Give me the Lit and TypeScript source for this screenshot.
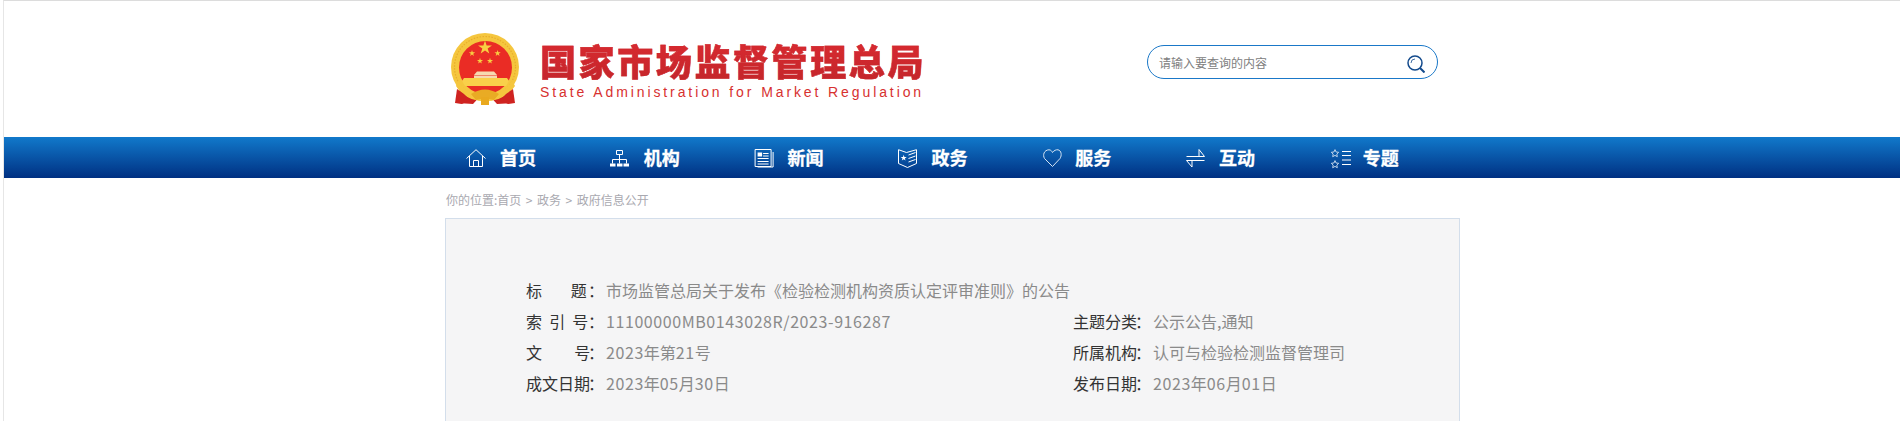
import { LitElement, html, css, svg } from "lit";
import { customElement } from "lit/decorators.js";

const star = (cx: number, cy: number, r: number) => {
  const pts: string[] = [];
  for (let i = 0; i < 10; i++) {
    const rad = i % 2 ? r * 0.382 : r;
    const a = -Math.PI / 2 + (i * Math.PI) / 5;
    pts.push(`${(cx + rad * Math.cos(a)).toFixed(2)},${(cy + rad * Math.sin(a)).toFixed(2)}`);
  }
  return svg`<polygon points=${pts.join(" ")} />`;
};

const emblem = html`<svg class="emblem" viewBox="0 0 68 72" width="68" height="72">
  <path d="M10 50 L6 70 L22 71 L32 60Z" fill="#cf2320"/>
  <path d="M58 50 L62 70 L46 71 L36 60Z" fill="#cf2320"/>
  <circle cx="34" cy="34" r="34" fill="#f5c63e"/>
  <circle cx="34" cy="34" r="30.5" fill="none" stroke="#e8ad2c" stroke-width="1.2" stroke-dasharray="1.500 1.500"/>
  <circle cx="34.500" cy="34.500" r="26.500" fill="#ea2c25"/>
  <g fill="#f8cf42">
    ${star(34, 14.7, 7.3)}${star(21, 20.3, 3.3)}${star(46.6, 20.3, 3.3)}${star(29, 28, 3.2)}${star(39, 28, 3.2)}
  </g>
  <path d="M26 38.500h17l3 3.500h-23zM23 42.500h23v2.500h-23z" fill="#f6d9b0"/>
  <path d="M13 45h43l2 3-3 5H14l-3-5z" fill="#f9d04a"/>
  <path d="M8 47 Q14 62 34 63 Q54 62 61 47 L64 53 Q54 68 34 68 Q14 68 5 53Z" fill="#f5c63e"/>
  <path d="M20 61 q14 -9 28 0 l-5 6 q-9 -3 -18 0z" fill="#e9ab24"/>
  <path d="M30 64h8v8h-8z" fill="#e9a91f"/>
  <path d="M6 56 L4 70 L11 71 L19 67 L13 61Z" fill="#cf2320"/>
  <path d="M62 56 L64 70 L57 71 L49 67 L55 61Z" fill="#cf2320"/>
</svg>`;

const iHome = html`<svg viewBox="0 -2 20 20" width="20" height="20"><path d="M.5 9.500 10 .7 19.500 9.500M3.500 7v10.500h13V7M7.500 17.500V11.500h5v6" /></svg>`;
const iOrg = html`<svg viewBox="0 -2 20 20" width="20" height="20"><path d="M6.500 1.500h6v4h-6zM9.500 5.500v9M2.500 14.500v-4h14v4" /><path class="f" d="M0 14.500h5.500v3H0zM7 14.500h5.500v3H7zM13.500 14.500H19v3h-5.500z"/></svg>`;
const iNews = html`<svg viewBox="-.6 -2 20 20" width="20" height="20"><path d="M.5.500h16v17H.5zM18.500 3v15H3M3 9.500h11M3 12.500h11M3 15h11M8.500 4.500H14M8.500 7H14" /><path class="f" d="M3 3.500h4.500v4H3z"/></svg>`;
const iGov = html`<svg viewBox="-1 -2 20 20" width="20" height="20"><path d="M.5.700 8.500 3.500 18.500.7V14.500L9.500 18.500.5 14.500ZM10.500 6 17.500 3.500M10.500 9.500 17.500 7M10.500 13 17.500 10.500" /><g class="f">${star(5.7, 9, 3.2)}</g></svg>`;
const iSvc = html`<svg class="dim" viewBox="-2 -2 20 20" width="20" height="20"><path d="M9.500 17.500 1.500 9.500C-.5 6 1 1 6 .8 8 .8 9 2.500 9.500 3.500 11 1.500 13 .5 15 .8 18.500 1.500 19 6.500 17 9.500Z" /></svg>`;
const iSwap = html`<svg viewBox="-1.500 -2 20 20" width="20" height="20"><path d="M0 7.500H18L12.500 .5V7.500M18 11.500H0L5.500 18V11.500" /></svg>`;
const iTopic = html`<svg viewBox="-2 -2 20 20" width="20" height="20"><path class="dimS" d="M4 .6 5.100 3 7.700 3.300 5.800 5.100 6.300 7.700 4 6.400 1.700 7.700 2.200 5.100.3 3.300 2.900 3zM4 11.600 5.100 14 7.700 14.300 5.800 16.100 6.300 18.700 4 17.400 1.700 18.700 2.200 16.100.3 14.300 2.900 14z"/><path d="M11 2.500h9M11 6.500h9M11 11h9M11 15.500h9" /></svg>`;

const navItems = [
  ["首页", iHome], ["机构", iOrg], ["新闻", iNews], ["政务", iGov],
  ["服务", iSvc], ["互动", iSwap], ["专题", iTopic],
] as const;

const runs = (v: string) =>
  v.split(/([0-9A-Za-z\/\-]+)/).map((s, i) => (i % 2 ? html`<span class="n">${s}</span>` : s));

@customElement("app-root")
export class AppRoot extends LitElement {
  static styles = css`
    :host {
      display: block;
      height: 421px;
      overflow: hidden;
      background: #fff;
      font-family: "Noto Sans CJK SC", "Noto Sans", sans-serif;
    }
    .page {
      margin-left: 3px;
      border-left: 1px solid #e6e6e6;
      border-top: 1px solid #dcdcdc;
      height: 420px;
    }
    .wrap {
      width: 1015px;
      margin-left: 441px;
    }
    .head {
      height: 136px;
      display: flex;
      align-items: flex-start;
    }
    .logo {
      display: flex;
      margin: 32px 0 0 6px;
    }
    .emblem { display: block; overflow: visible; }
    .logoText {
      margin: 7px 0 0 21px;
      display: flex;
      flex-direction: column;
    }
    .cn {
      font-size: 36px;
      line-height: 40px;
      font-weight: 900;
      letter-spacing: 2.6px;
      white-space: nowrap;
      background: linear-gradient(#d92a30, #c4262b);
      -webkit-background-clip: text;
      background-clip: text;
      color: transparent;
      -webkit-text-stroke: 0.4px #cf272c;
    }
    .en {
      font-family: "Liberation Sans", sans-serif;
      font-size: 14px;
      line-height: 16px;
      letter-spacing: 2.9px;
      color: #d7312f;
      white-space: nowrap;
      margin-top: 4px;
    }
    .search {
      margin: 44px 22px 0 auto;
      width: 291px;
      height: 34px;
      flex: none;
      box-sizing: border-box;
      border: 1px solid #1a78c8;
      border-radius: 17px;
      display: flex;
      align-items: center;
      justify-content: space-between;
      padding: 0 12px 0 11px;
      font-size: 12px;
      color: #808080;
      background: #fff;
    }
    .search svg { display: block; fill: none; stroke: #134a8c; stroke-width: 1.5; margin-top: 4px; }
    .nav {
      height: 41px;
      background: linear-gradient(#1179cb, #003082);
    }
    .navIn {
      display: grid;
      grid-template-columns: repeat(7, 143.8px);
      margin-left: 462px;
      height: 41px;
    }
    .item {
      display: flex;
      align-items: center;
      gap: 14px;
      color: #fff;
      font-size: 18px;
      font-weight: 700;
      white-space: nowrap;
      -webkit-text-stroke: 0.3px #fff;
    }
    .item span { margin-top: -1px; }
    .item svg { display: block; flex: none; fill: none; stroke: #fff; stroke-width: 1; overflow: visible; margin-top: -1px; }
    .item svg .f { fill: #fff; stroke: none; }
    .item svg.dim { stroke: #d5e4f4; }
    .item svg .dimS { stroke: #c3d6ec; }
    .crumb {
      height: 40px;
      box-sizing: border-box;
      padding: 13px 0 0 1px;
      font-size: 12px;
      line-height: 18px;
      color: #a9a9b0;
      white-space: nowrap;
    }
    .sep { margin: 0 4.5px; }
    .panel {
      width: 1015px;
      height: 300px;
      box-sizing: border-box;
      border: 1px solid #d3deeb;
      background: #f5f5f6;
      padding: 56px 0 0 80px;
    }
    .grid {
      display: grid;
      grid-template-columns: 547px 1fr;
      grid-auto-rows: 31px;
      font-size: 16px;
      line-height: 31px;
      color: #8a8a8a;
    }
    .full { grid-column: 1 / -1; }
    .row { display: flex; white-space: nowrap; }
    .k { width: 64px; flex: none; color: #333; white-space: pre; }
    .c { width: 18px; margin-left: -2px; flex: none; color: #333; }
    .n { letter-spacing: 0.58px; }
  `;

  private row(k: string, v: string, full = false) {
    return html`<div class="row ${full ? "full" : ""}"><span class="k">${k}</span><span class="c">：</span><span>${runs(v)}</span></div>`;
  }

  render() {
    return html`<div class="page">
      <div class="wrap">
        <header class="head">
          <div class="logo">
            ${emblem}
            <div class="logoText">
              <div class="cn">国家市场监督管理总局</div>
              <div class="en">State Administration for Market Regulation</div>
            </div>
          </div>
          <div class="search">
            <span>请输入要查询的内容</span>
            <svg viewBox="0 0 18 18" width="18" height="18"><circle cx="8" cy="8" r="7"/><path d="M13 13 17.500 17.500" stroke-width="2"/><path d="M4 8a4 4 0 0 1 4-4" stroke-width=".8"/></svg>
          </div>
        </header>
      </div>
      <nav class="nav"><div class="navIn">
        ${navItems.map(([t, i]) => html`<div class="item">${i}<span>${t}</span></div>`)}
      </div></nav>
      <div class="wrap">
        <div class="crumb">你的位置:首页<span class="sep">&gt;</span>政务<span class="sep">&gt;</span>政府信息公开</div>
        <section class="panel">
          <div class="grid">
            ${this.row("标        题", "市场监管总局关于发布《检验检测机构资质认定评审准则》的公告", true)}
            ${this.row("索  引  号", "11100000MB0143028R/2023-916287")}
            ${this.row("主题分类", "公示公告,通知")}
            ${this.row("文         号", "2023年第21号")}
            ${this.row("所属机构", "认可与检验检测监督管理司")}
            ${this.row("成文日期", "2023年05月30日")}
            ${this.row("发布日期", "2023年06月01日")}
          </div>
        </section>
      </div>
    </div>`;
  }
}
